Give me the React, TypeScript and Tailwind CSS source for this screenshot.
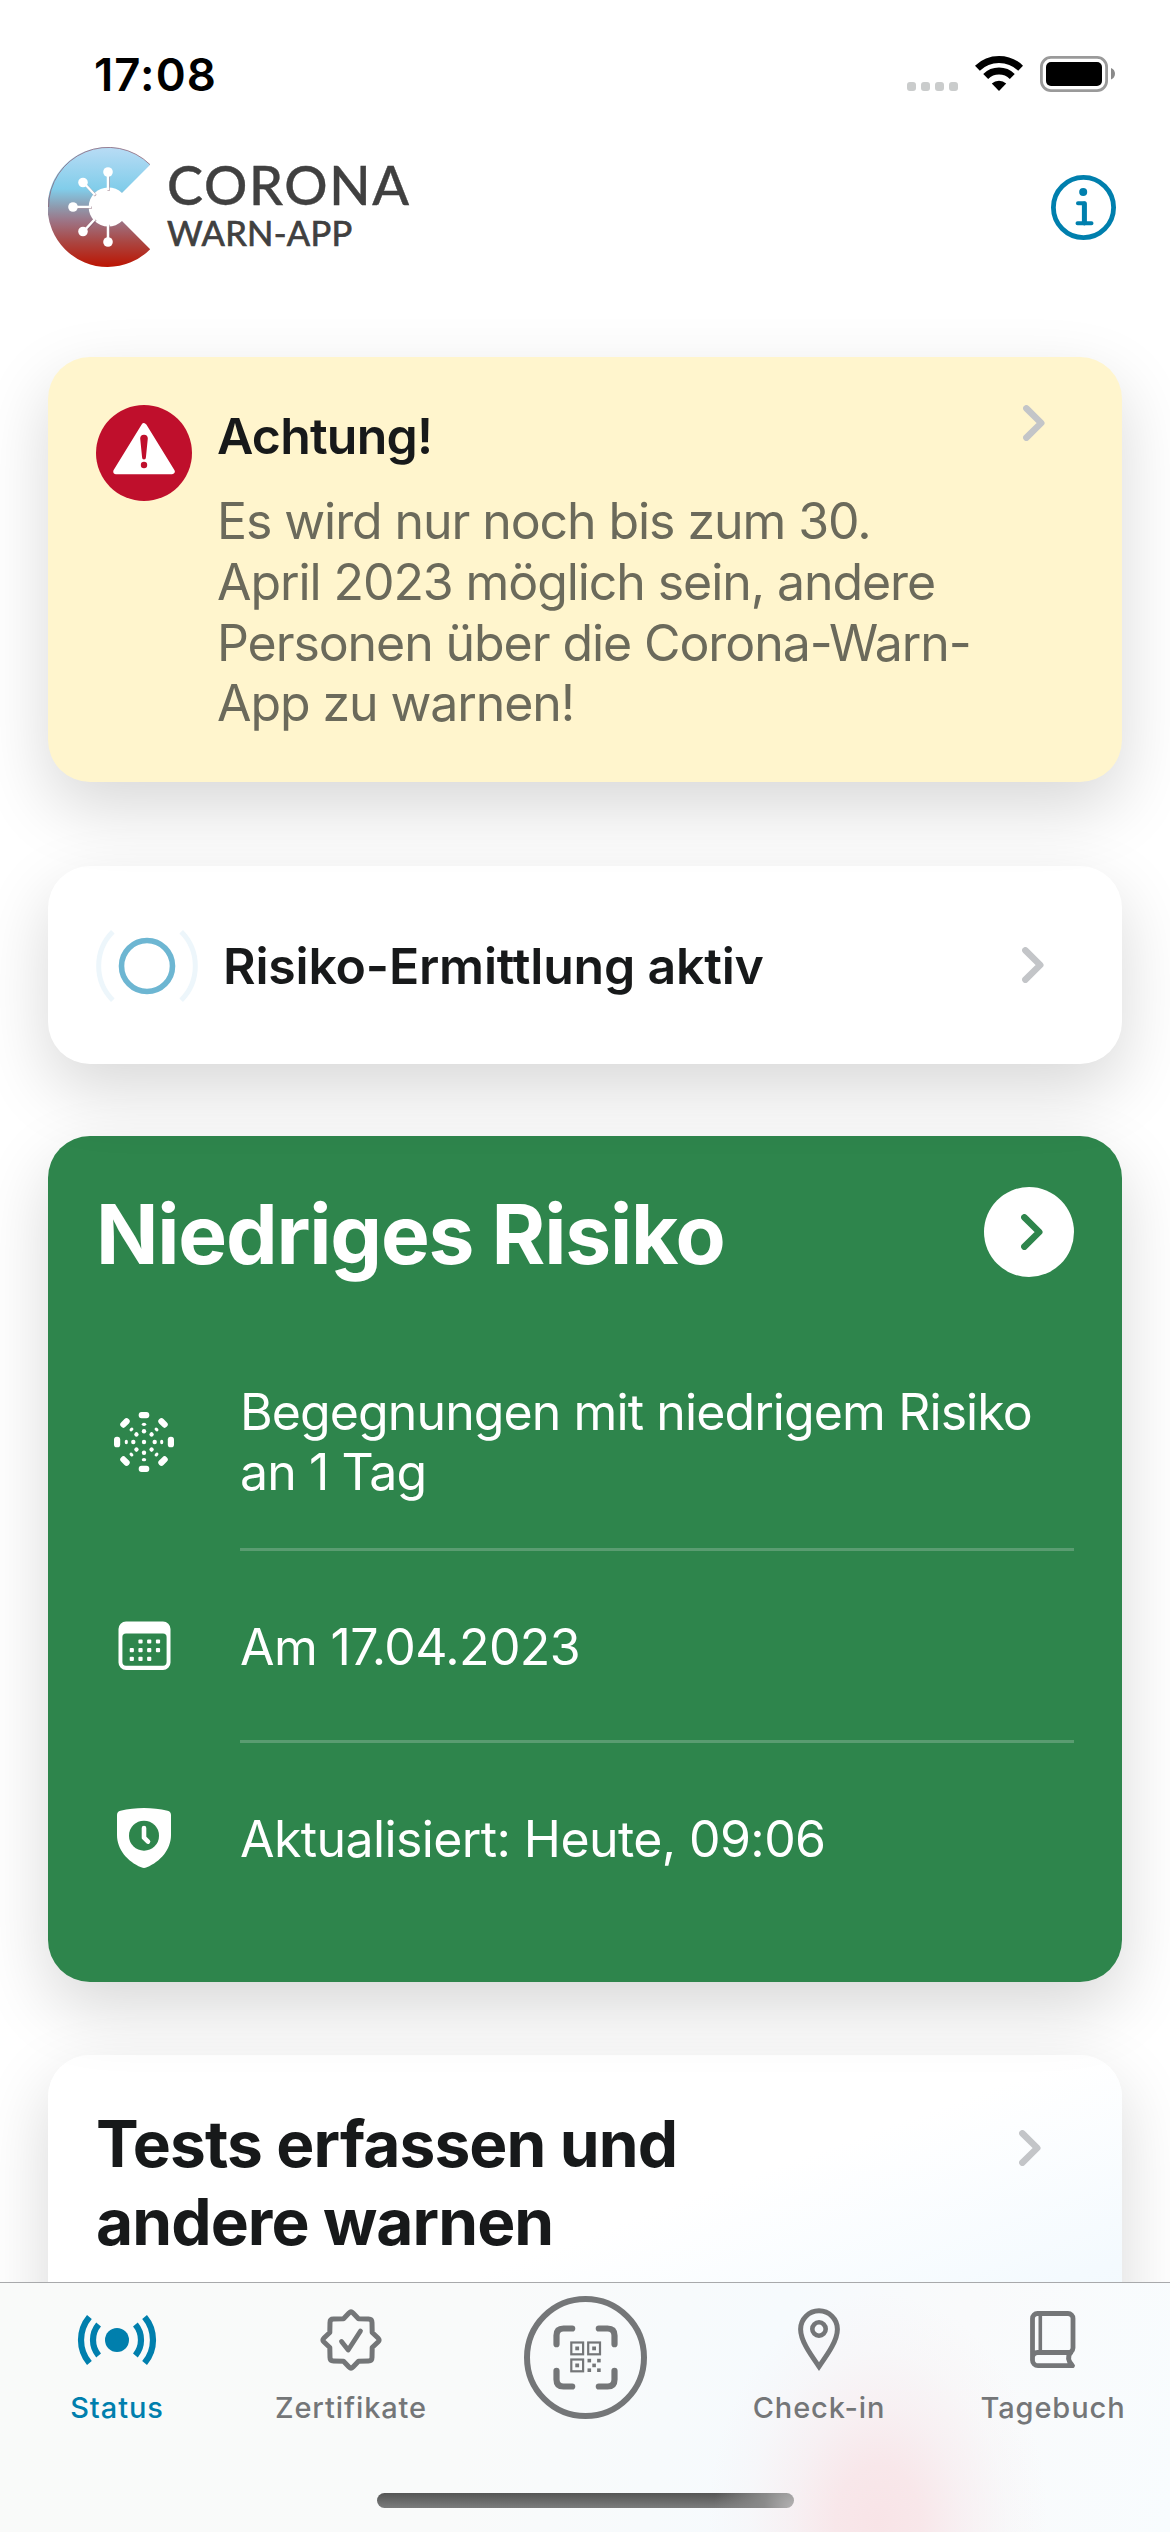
import React from "react";

const CARD_SHADOW = "shadow-[0_26px_68px_rgba(0,0,0,0.155)]";

function Chevron({ className }: { className: string }) {
  return (
    <svg className={className} width="22" height="36" viewBox="0 0 22 36" fill="none" stroke="currentColor" strokeWidth="6.6" strokeLinecap="round" strokeLinejoin="round">
      <path d="M3.4 3.4 18.2 18 3.4 32.6" />
    </svg>
  );
}

function StatusBar() {
  return (
    <div className="flex h-[147px] items-start justify-between pl-[94px] pr-[55px]">
      <div className="mt-[45px] text-[45.500px] font-semibold leading-[60px] tracking-[1.100px] text-black">17:08</div>
      <div className="mt-[55px] flex items-start">
        <div className="mt-[27px] flex gap-[5px]">
          <i className="size-[9px] rounded-[3px] bg-[#cacccc]" />
          <i className="size-[9px] rounded-[3px] bg-[#cacccc]" />
          <i className="size-[9px] rounded-[3px] bg-[#cacccc]" />
          <i className="size-[9px] rounded-[3px] bg-[#cacccc]" />
        </div>
        <svg className="ml-[17px]" width="48" height="36" viewBox="0 0 48 36" fill="none" stroke="#000">
          <path d="M2.400 13.200a31 31 0 0 1 43.200 0" strokeWidth="7" />
          <path d="M10.700 21.500a19 19 0 0 1 26.600 0" strokeWidth="7" />
          <path d="M24 36l-7.200-7.400a10.400 10.400 0 0 1 14.400 0z" fill="#000" stroke="none" />
        </svg>
        <svg className="ml-[17px] mt-[1px]" width="75" height="36" viewBox="0 0 75 36">
          <rect x="1.400" y="1.400" width="65.200" height="33.200" rx="9.500" fill="none" stroke="#9a9a9a" strokeWidth="2.800" />
          <rect x="6" y="6" width="56" height="24" rx="5" fill="#000" />
          <path d="M71 12c5.300 2 5.300 9.500 0 11.500z" fill="#8a8a8a" />
        </svg>
      </div>
    </div>
  );
}

function Header() {
  return (
    <header className="flex h-[210px] items-start justify-between pl-[48px] pr-[54px]">
      <div className="flex">
        <svg width="104" height="120" viewBox="0 0 104 120">
          <defs>
            <linearGradient id="logoFill" x1="0" y1="0" x2="0" y2="1">
              <stop offset="0" stopColor="#b9dcf5" />
              <stop offset="0.35" stopColor="#81cdea" />
              <stop offset="0.5" stopColor="#8e9aae" />
              <stop offset="0.62" stopColor="#9d7384" />
              <stop offset="0.8" stopColor="#ab443f" />
              <stop offset="1" stopColor="#bc1402" />
            </linearGradient>
          </defs>
          <path d="M102.200 17.800A60 60 0 1 0 102.200 102.200L74 74A19.600 19.600 0 1 1 74 46Z" fill="url(#logoFill)" />
          <path d="M102 17.600A59.600 59.600 0 0 0 .5 60" fill="none" stroke="#8c5a6c" strokeWidth="0.9" opacity="0.8" />
          <g stroke="#7c5566" strokeWidth="2.500" opacity="0.55" transform="translate(0.700 0.700)">
            <path d="M60 25v18M60 95V77M25 60h18M35 35l12 13M35 85l12-13" />
          </g>
          <g stroke="#fff" strokeWidth="2.500" fill="#fff">
            <path d="M60 25v18M60 95V77M25 60h18M35 35l12 13M35 85l12-13" />
          </g>
          <g fill="#fff">
            <circle cx="60" cy="25" r="4.800" />
            <circle cx="60" cy="95" r="4.800" />
            <circle cx="25" cy="60" r="4.800" />
            <circle cx="35" cy="35.500" r="4.800" />
            <circle cx="35" cy="84.500" r="4.800" />
          </g>
        </svg>
        <div className="ml-[15px] flex flex-col font-['Lato'] text-[#404040]">
          <span className="mt-[8px] text-[54px] font-medium leading-[60px] tracking-[1.700px] [-webkit-text-stroke:0.4px_#404040]">CORONA</span>
          <span className="mt-[-2px] text-[34.500px] font-normal leading-[40px] tracking-[0.300px] [-webkit-text-stroke:0.7px_#404040]">WARN-APP</span>
        </div>
      </div>
      <svg className="mt-[28px]" width="65" height="65" viewBox="0 0 65 65" fill="none" stroke="#007fad" strokeLinecap="round" strokeLinejoin="round">
        <circle cx="32.500" cy="32.500" r="30.100" strokeWidth="4.800" />
        <path d="M27 28.300h6.700v20M26.500 48.300h14" strokeWidth="4" />
        <path d="M33.300 29v19" strokeWidth="4.800" />
        <circle cx="32.200" cy="17" r="4" fill="#007fad" stroke="none" />
      </svg>
    </header>
  );
}

function WarningIcon() {
  return (
    <svg width="96" height="96" viewBox="0 0 96 96">
      <circle cx="48" cy="48" r="48" fill="#bf0f2c" />
      <path d="M48 21 76 66.500H20Z" fill="#fff" stroke="#fff" strokeWidth="5.500" strokeLinejoin="round" />
      <path d="M44.200 33.500a3.800 3.800 0 0 1 7.600 0l-1.900 19a1.900 1.900 0 0 1-3.800 0z" fill="#bf0f2c" />
      <circle cx="48" cy="60" r="3.200" fill="#bf0f2c" />
    </svg>
  );
}

function EncounterIcon() {
  const angles = [0, 45, 90, 135, 180, 225, 270, 315];
  return (
    <svg width="60" height="60" viewBox="-30 -30 60 60" fill="#fff">
      <circle r="2.200" />
      {angles.map((a) => (
        <g key={a} transform={`rotate(${a})`}>
          <rect x="-5.300" y="-30" width="10.600" height="6.200" rx="2.900" />
          <ellipse cy="-17.700" rx="2.200" ry="1.600" />
          <circle cy="-10.700" r="2.200" />
        </g>
      ))}
    </svg>
  );
}

function CalendarIcon() {
  const dots = [
    [22, 20], [30.7, 20], [39.5, 20],
    [13.3, 28.7], [22, 28.7], [30.7, 28.7], [39.5, 28.7],
    [13.3, 37.3], [22, 37.3], [30.7, 37.3],
  ];
  return (
    <svg width="53" height="50" viewBox="0 0 53 50" fill="#fff">
      <path fillRule="evenodd" d="M8 .5h37a7.500 7.500 0 0 1 7.500 7.500v33.500a7.500 7.500 0 0 1-7.500 7.500H8a7.500 7.500 0 0 1-7.500-7.500V8A7.500 7.500 0 0 1 8 .5ZM8 12.500a3.600 3.600 0 0 0-3.600 3.600v25A3.600 3.600 0 0 0 8 44.700h37a3.600 3.600 0 0 0 3.600-3.600v-25a3.600 3.600 0 0 0-3.600-3.600Z" />
      {dots.map(([x, y]) => (
        <rect key={`${x}-${y}`} x={x - 1.6} y={y - 1.6} width="4.200" height="4.200" rx="1" />
      ))}
    </svg>
  );
}

function ShieldClockIcon() {
  return (
    <svg width="54" height="60" viewBox="0 0 54 60">
      <path d="M3.500 2.700C11 1 19 .1 27 .1S43 1 50.500 2.700C52.900 3.200 54 4.800 54 7v20c0 14.500-10.500 26.500-24.200 32.300-2 .9-3.600.9-5.600 0C10.500 53.500 0 41.500 0 27V7c0-2.200 1.100-3.800 3.500-4.300Z" fill="#fff" />
      <circle cx="27" cy="27.700" r="15" fill="#2e854c" />
      <path d="M27 20v9.700l4 3.900" fill="none" stroke="#fff" strokeWidth="4.600" strokeLinecap="round" strokeLinejoin="round" />
    </svg>
  );
}

function RiskRow({ icon, children, className, textClass }: { icon: React.ReactNode; children: React.ReactNode; className: string; textClass: string }) {
  return (
    <div className={`flex items-center ${className}`}>
      <div className="flex w-[96px] shrink-0 justify-center">{icon}</div>
      <div className={`ml-[48px] whitespace-nowrap ${textClass}`}>{children}</div>
    </div>
  );
}

function StatusIcon() {
  return (
    <svg width="80" height="64" viewBox="-40 -32 80 64" fill="none" stroke="currentColor" strokeWidth="6.200">
      <circle r="12" fill="currentColor" stroke="none" />
      <path d="M-27.600-23.100a36 36 0 0 0 0 46.200M27.600-23.100a36 36 0 0 1 0 46.200M-18.400-15.400a24 24 0 0 0 0 30.800M18.400-15.400a24 24 0 0 1 0 30.800" />
    </svg>
  );
}

function CertificateIcon() {
  return (
    <svg width="64" height="64" viewBox="-32 -32 64 64" fill="none" stroke="currentColor" strokeLinecap="round" strokeLinejoin="round">
      <path
        strokeWidth="5"
        d="M-2-27Q0-29 2-27L7.500-21.200 17.500-21Q21-21 21-17.500L21.200-7.500 27-2Q29 0 27 2L21.200 7.500 21 17.500Q21 21 17.500 21L7.500 21.200 2 27Q0 29-2 27L-7.500 21.200-17.500 21Q-21 21-21 17.500L-21.200 7.500-27 2Q-29 0-27-2L-21.200-7.500-21-17.500Q-21-21-17.500-21L-7.500-21.200Z"
      />
      <path d="M-9.500 1.500-2.800 10 9.500-9" strokeWidth="4.800" />
    </svg>
  );
}

function ScanIcon() {
  return (
    <svg width="123" height="123" viewBox="-61.500 -61.500 123 123" fill="none" stroke="currentColor">
      <circle r="58.500" strokeWidth="6" />
      <path d="M-29-13.300V-22Q-29-29-22-29H-13.300M29-13.300V-22Q29-29 22-29H13.300M-29 13.300V22Q-29 29-22 29H-13.300M29 13.300V22Q29 29 22 29H13.300" strokeWidth="6.200" strokeLinecap="round" />
      <g strokeWidth="2.200">
        <rect x="-14.200" y="-15" width="11.800" height="11.800" />
        <rect x="2.700" y="-15" width="11.800" height="11.800" />
        <rect x="-14.200" y="2" width="11.800" height="11.800" />
      </g>
      <g fill="currentColor" stroke="none">
        <rect x="-10.200" y="-11" width="3.800" height="3.800" />
        <rect x="6.700" y="-11" width="3.800" height="3.800" />
        <rect x="-10.200" y="6" width="3.800" height="3.800" />
        <rect x="2" y="1.300" width="3.600" height="3.600" />
        <rect x="11.600" y="1.300" width="3.600" height="3.600" />
        <rect x="6.800" y="6.100" width="3.600" height="3.600" />
        <rect x="2" y="10.900" width="3.600" height="3.600" />
        <rect x="11.600" y="10.900" width="3.600" height="3.600" />
      </g>
    </svg>
  );
}

function PinIcon() {
  return (
    <svg width="60" height="64" viewBox="0 0 60 64" fill="none" stroke="currentColor" strokeWidth="5">
      <path d="M30 58.500C22 47 11.600 33 11.600 21.200a18.400 18.400 0 0 1 36.800 0C48.400 33 38 47 30 58.500Z" />
      <circle cx="30" cy="21" r="6.700" strokeWidth="4.600" />
    </svg>
  );
}

function BookIcon() {
  return (
    <svg width="46" height="58" viewBox="0 0 46 58" fill="none" stroke="currentColor" strokeWidth="4.800" strokeLinecap="round" strokeLinejoin="round">
      <path d="M2.500 47.500V7.500a5 5 0 0 1 5-5H38a5 5 0 0 1 5 5V37q0 2-2 4-5.500 6.500 1.500 13.700H8a5.500 5.500 0 0 1-5.500-5.500V46.500a5 5 0 0 1 5-5H41" />
      <path d="M10.300 5v34.500" strokeWidth="3.600" strokeLinecap="butt" />
    </svg>
  );
}

function Tab({ label, active, icon }: { label: string; active?: boolean; icon: React.ReactNode }) {
  return (
    <div className={`flex w-[234px] flex-col items-center pt-[25px] ${active ? "text-[#007fad]" : "text-[#747678]"}`}>
      <div className="flex h-[64px] items-center">{icon}</div>
      <div className="mt-[16px] text-[29px] font-medium leading-[40px] tracking-[0.9px]">{label}</div>
    </div>
  );
}

export default function App() {
  return (
    <div className="flex h-[2532px] w-[1170px] flex-col overflow-hidden bg-white font-['Inter',sans-serif] text-[#17191a]">
      <StatusBar />
      <Header />
      <main className="flex min-h-0 flex-1 flex-col px-[48px]">
        <section className={`relative z-40 flex h-[425px] shrink-0 items-start rounded-[42px] bg-[#fff5cd] pl-[48px] pt-[48px] ${CARD_SHADOW}`}>
          <WarningIcon />
          <div className="ml-[25px] mt-[1px] w-[780px]">
            <h2 className="text-[50px] font-semibold leading-[60px] tracking-[-0.8px]">Achtung!</h2>
            <p className="mt-[25px] whitespace-nowrap text-[50px] leading-[60.800px] tracking-[-1.080px] text-[#6b6a5b]">
              Es wird nur noch bis zum 30.
              <br />
              April 2023 möglich sein, andere
              <br />
              Personen über die Corona-Warn-
              <br />
              App zu warnen!
            </p>
          </div>
          <Chevron className="ml-[26px] text-[#c3c5c8]" />
        </section>

        <section className={`relative z-30 mt-[84px] flex h-[198px] shrink-0 items-center rounded-[42px] bg-white pl-[47px] pr-[78px] ${CARD_SHADOW}`}>
          <svg className="mt-[2px]" width="104" height="80" viewBox="-52 -40 104 80" fill="none">
            <circle r="25.500" stroke="#6db6d2" strokeWidth="5.600" />
            <path d="M-34.200-34.200a48.500 48.500 0 0 0 0 68.400M34.200-34.200a48.500 48.500 0 0 1 0 68.400" stroke="#edf6fb" strokeWidth="5" />
          </svg>
          <h2 className="ml-[24px] mt-[2px] flex-1 text-[50px] font-semibold leading-[60px] tracking-[-0.2px]">Risiko-Ermittlung aktiv</h2>
          <Chevron className="text-[#c3c5c8]" />
        </section>

        <section className={`relative z-20 mt-[72px] h-[846px] shrink-0 rounded-[42px] bg-[#2e854c] px-[48px] pt-[51px] text-white ${CARD_SHADOW}`}>
          <div className="flex h-[97px] items-start justify-between">
            <h1 className="text-[82px] font-bold leading-[96px] tracking-[-1.200px]">Niedriges Risiko</h1>
            <div className="flex size-[90px] items-center justify-center rounded-full bg-white pl-[6px]">
              <Chevron className="text-[#2e854c]" />
            </div>
          </div>
          <div className="pt-[74px] text-[50px] leading-[60px]">
            <RiskRow className="h-[168px]" textClass="tracking-[-0.900px]" icon={<EncounterIcon />}>
              Begegnungen mit niedrigem Risiko
              <br />
              an 1 Tag
            </RiskRow>
            <div className="ml-[144px] mt-[22px] h-[3px] bg-[#5a9c71]" />
            <RiskRow className="h-[189px]" textClass="pt-[3px] tracking-[-0.600px]" icon={<CalendarIcon />}>Am 17.04.2023</RiskRow>
            <div className="ml-[144px] h-[3px] bg-[#5a9c71]" />
            <RiskRow className="h-[189px]" textClass="pt-[3px] tracking-[-0.600px]" icon={<ShieldClockIcon />}>Aktualisiert: Heute, 09:06</RiskRow>
          </div>
        </section>

        <section className={`relative z-10 mt-[73px] flex h-[600px] shrink-0 items-start justify-between rounded-[42px] bg-[linear-gradient(160deg,#ffffff_38%,#f4fafe_60%,#e9f6fd_100%)] pl-[48px] pr-[81px] pt-[50px] ${CARD_SHADOW}`}>
          <h2 className="text-[64px] font-bold leading-[78px] tracking-[-0.900px]">
            Tests erfassen und
            <br />
            andere warnen
          </h2>
          <Chevron className="mt-[25px] text-[#c3c5c8]" />
        </section>
      </main>

      <nav className="relative z-50 flex h-[250px] shrink-0 flex-col border-t border-[#a8a9ab] bg-[radial-gradient(ellipse_170px_230px_at_878px_240px,#f8e4e7_0%,rgba(248,229,232,0.9)_25%,rgba(247,236,239,0.7)_50%,rgba(247,242,244,0.4)_75%,rgba(248,249,251,0)_100%),linear-gradient(100deg,#f9faf9_0%,#f9fafa_40%,#f6fafd_65%,#f9fafb_80%,#f8fcfe_100%)]">
        <div className="flex h-[210px]">
          <Tab label="Status" active icon={<StatusIcon />} />
          <Tab label="Zertifikate" icon={<CertificateIcon />} />
          <div className="flex w-[234px] justify-center pt-[13px] text-[#747678]">
            <ScanIcon />
          </div>
          <Tab label="Check-in" icon={<PinIcon />} />
          <Tab label="Tagebuch" icon={<BookIcon />} />
        </div>
        <div className="ml-[377px] h-[15px] w-[417px] rounded-full bg-[radial-gradient(circle_at_100%_100%,#b5b3b4_0px,#8a8a8a_30px,transparent_80px),linear-gradient(180deg,#555555_0%,#7b7c7c_100%)]" />
      </nav>
    </div>
  );
}
